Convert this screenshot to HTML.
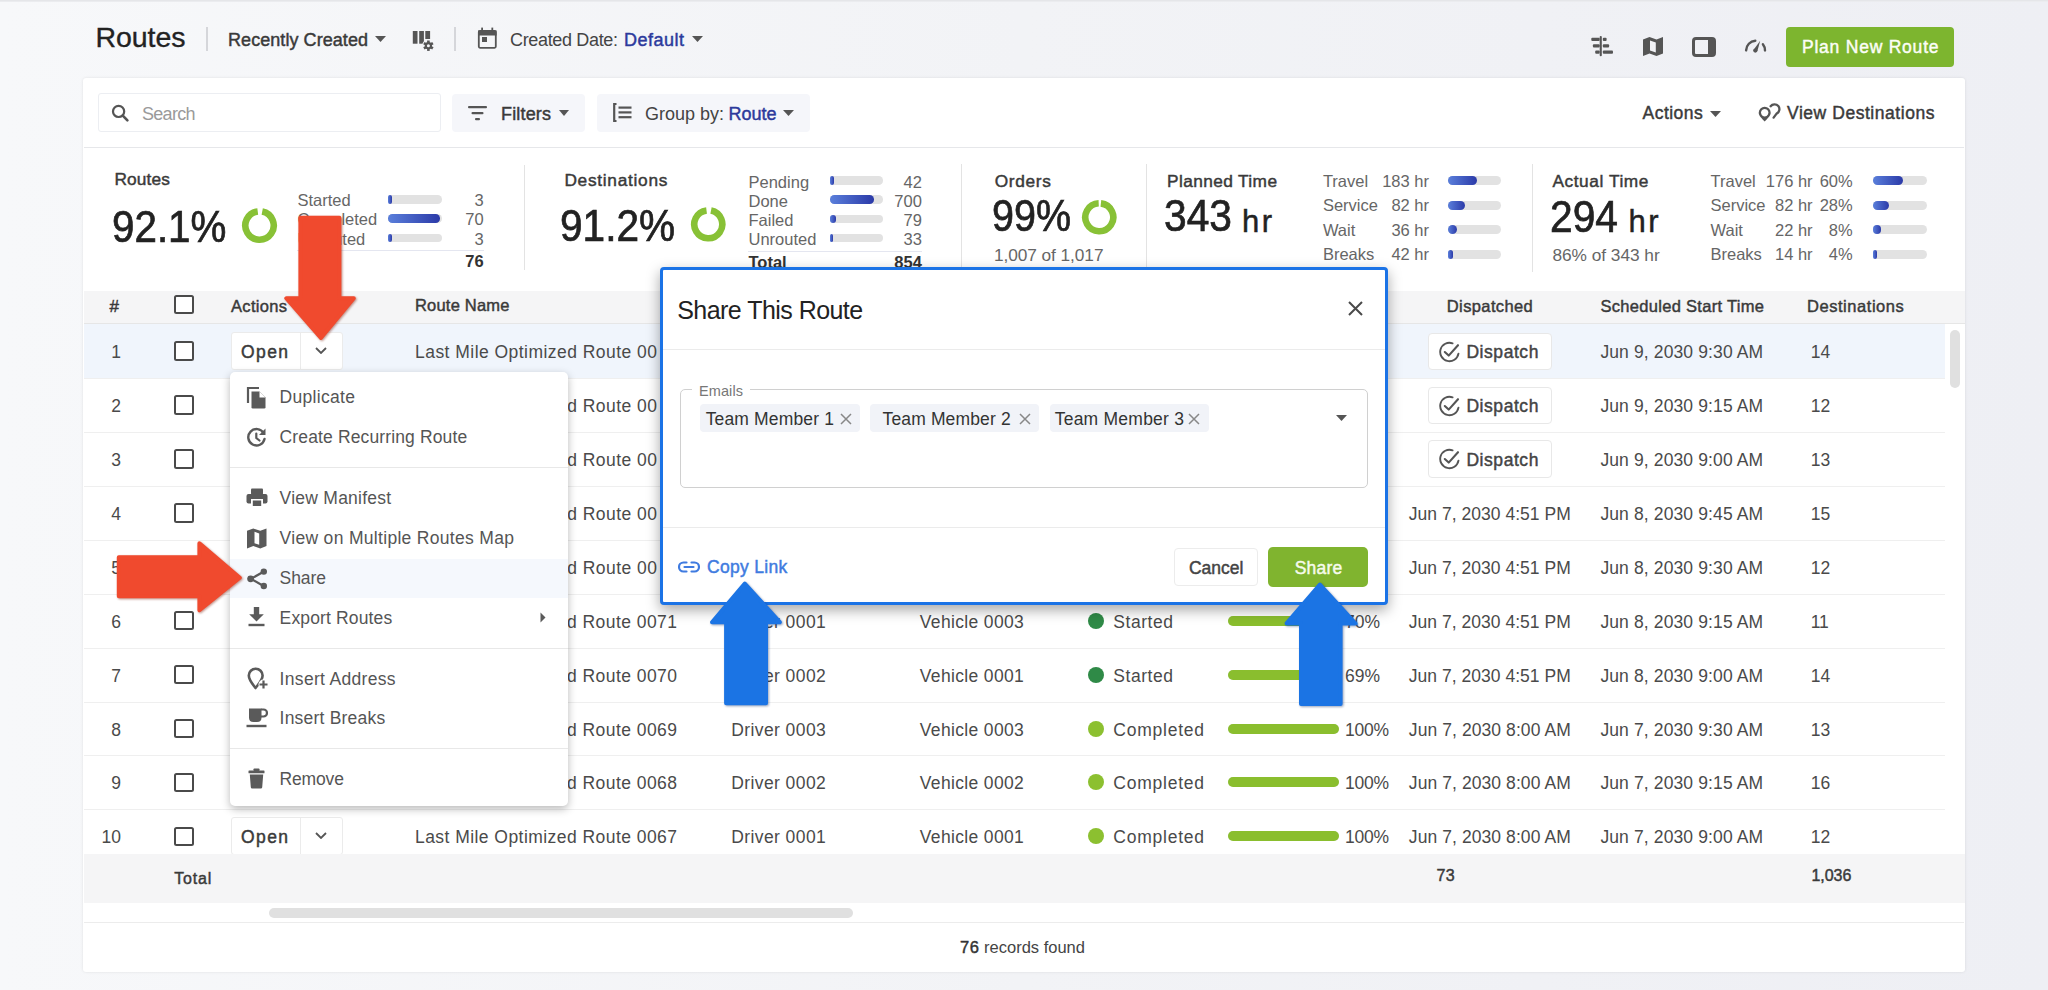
<!DOCTYPE html>
<html><head><meta charset="utf-8"><title>Routes</title>
<style>
html,body{margin:0;padding:0;}
body{width:2048px;height:990px;overflow:hidden;position:relative;background:#f1f2f6;font-family:"Liberation Sans", sans-serif;}
.t{position:absolute;white-space:pre;line-height:1;font-family:"Liberation Sans", sans-serif;}
</style></head><body>
<div style="position:absolute;left:0px;top:0px;width:2048px;height:990px;background:linear-gradient(90deg,#f7f8fa 0%,#f2f3f6 50%,#eeeff4 100%)"></div>
<div style="position:absolute;left:0px;top:0px;width:2048px;height:2px;background:linear-gradient(180deg,#e2e3e6,#eeeff2)"></div>
<div class="t" style="left:95.50px;top:23.37px;font-size:28.5px;font-weight:400;color:#222;letter-spacing:-0.062px;-webkit-text-stroke:0.35px #222;">Routes</div>
<div style="position:absolute;left:206px;top:27px;width:2px;height:24px;background:#d5d6da"></div>
<div class="t" style="left:228.00px;top:31.26px;font-size:18px;font-weight:400;color:#3a3a3a;letter-spacing:0.061px;-webkit-text-stroke:0.45px #3a3a3a;">Recently Created</div>
<svg style="position:absolute;left:375px;top:36px;" width="11" height="6" viewBox="0 0 11 6"><path d="M0 0 L11 0 L5.5 6 Z" fill="#555"/></svg>
<svg style="position:absolute;left:412px;top:30px;" width="22" height="22" viewBox="0 0 22 22"><rect x="0.8" y="1" width="4.7" height="12.7" fill="#555"/><rect x="7.2" y="1" width="4.7" height="12.7" fill="#555"/><rect x="13.3" y="1" width="4.8" height="8" fill="#555"/><g transform="translate(16.4,15.7)"><circle r="6.3" fill="#f4f5f8"/><circle r="3.6" fill="#555"/><rect x="-1.3" y="-5.2" width="2.6" height="3" transform="rotate(0)" fill="#555"/><rect x="-1.3" y="-5.2" width="2.6" height="3" transform="rotate(60)" fill="#555"/><rect x="-1.3" y="-5.2" width="2.6" height="3" transform="rotate(120)" fill="#555"/><rect x="-1.3" y="-5.2" width="2.6" height="3" transform="rotate(180)" fill="#555"/><rect x="-1.3" y="-5.2" width="2.6" height="3" transform="rotate(240)" fill="#555"/><rect x="-1.3" y="-5.2" width="2.6" height="3" transform="rotate(300)" fill="#555"/><circle r="1.5" fill="#f4f5f8"/></g></svg>
<div style="position:absolute;left:454px;top:27px;width:2px;height:24px;background:#d5d6da"></div>
<svg style="position:absolute;left:477px;top:27px;" width="21" height="22" viewBox="0 0 21 22"><rect x="1.8" y="4" width="17" height="16.8" rx="1.2" fill="none" stroke="#555" stroke-width="1.8"/><rect x="1" y="3.5" width="18.6" height="5" fill="#555"/><rect x="4.2" y="0.6" width="1.8" height="4" fill="#555"/><rect x="14.4" y="0.6" width="1.8" height="4" fill="#555"/><rect x="5" y="10" width="5" height="5" fill="#555"/></svg>
<div class="t" style="left:510.00px;top:31.26px;font-size:18px;font-weight:400;color:#444;letter-spacing:-0.339px;">Created Date:</div>
<div class="t" style="left:624.00px;top:31.26px;font-size:18px;font-weight:400;color:#2c3a9c;letter-spacing:0.492px;-webkit-text-stroke:0.45px #2c3a9c;">Default</div>
<svg style="position:absolute;left:692px;top:36px;" width="11" height="6" viewBox="0 0 11 6"><path d="M0 0 L11 0 L5.5 6 Z" fill="#555"/></svg>
<svg style="position:absolute;left:1590px;top:36px;" width="24" height="21" viewBox="0 0 24 21"><rect x="9.7" y="0" width="2.1" height="20.2" rx="1" fill="#555"/><rect x="1.3" y="1.8" width="8.4" height="3.2" rx="1" fill="#555"/><rect x="12.8" y="1.8" width="3.8" height="3.2" rx="1" fill="#555"/><rect x="2.9" y="8.2" width="6.8" height="3.4" rx="1" fill="#555"/><rect x="12.8" y="8.2" width="6.3" height="3.4" rx="1" fill="#555"/><rect x="5.2" y="14.4" width="4.5" height="3.4" rx="1" fill="#555"/><rect x="12.8" y="14.4" width="10.2" height="3.4" rx="1" fill="#555"/></svg>
<svg style="position:absolute;left:1643px;top:37px;" width="20" height="19" viewBox="0 0 20 19"><path d="M0 2.5 L6.5 0 L13.5 2.5 L20 0 L20 16.5 L13.5 19 L6.5 16.5 L0 19 Z" fill="#555"/><path d="M7 3.5 L12.8 5.5 L12.8 15.5 L7 13.5 Z" fill="#f1f2f6"/></svg>
<svg style="position:absolute;left:1692px;top:37px;" width="24" height="20" viewBox="0 0 24 20"><rect x="1.5" y="1.5" width="21" height="17" rx="2.5" fill="none" stroke="#555" stroke-width="3"/><rect x="16" y="1.5" width="6.5" height="17" fill="#555"/></svg>
<svg style="position:absolute;left:1744px;top:39px;" width="24" height="14" viewBox="0 0 24 14"><path d="M2.1 11.4 A10 10 0 0 1 11.3 1.7" fill="none" stroke="#555" stroke-width="2.4" stroke-linecap="round"/><path d="M18.9 5.3 A10 10 0 0 1 21 11.4" fill="none" stroke="#555" stroke-width="2.4" stroke-linecap="round"/><path d="M9.3 11.2 L16.2 1.8 L13.3 12.2 Z" fill="#555"/><circle cx="11.3" cy="11.6" r="2.1" fill="#555"/></svg>
<div style="position:absolute;left:1786px;top:27px;width:168px;height:40px;background:#7db52f;border-radius:4px"></div>
<div class="t" style="left:1802.00px;top:39.19px;font-size:17.5px;font-weight:400;color:#fbfdf6;letter-spacing:0.772px;-webkit-text-stroke:0.45px #fbfdf6;">Plan New Route</div>
<div style="position:absolute;left:83px;top:78px;width:1882px;height:894px;background:#fff;border-radius:3px;box-shadow:0 0 3px rgba(0,0,0,0.10)"></div>
<div style="position:absolute;left:98px;top:93px;width:343px;height:39px;background:#fff;border:1px solid #eceef2;border-radius:3px;box-sizing:border-box"></div>
<svg style="position:absolute;left:110px;top:103px;" width="20" height="20" viewBox="0 0 20 20"><circle cx="8.6" cy="8.4" r="5.6" fill="none" stroke="#555" stroke-width="2.2"/><path d="M12.8 12.6 L17.4 17.4" stroke="#555" stroke-width="2.6" stroke-linecap="round"/></svg>
<div class="t" style="left:142.00px;top:104.76px;font-size:18px;font-weight:400;color:#9a9a9a;letter-spacing:-0.709px;">Search</div>
<div style="position:absolute;left:452px;top:94px;width:133px;height:38px;background:#f5f6fa;border-radius:4px"></div>
<svg style="position:absolute;left:468px;top:105px;" width="21" height="17" viewBox="0 0 21 17"><rect x="0" y="1" width="19" height="2.3" rx="1" fill="#555"/><rect x="3.5" y="7" width="12" height="2.3" rx="1" fill="#555"/><rect x="7" y="13" width="5" height="2.3" rx="1" fill="#555"/></svg>
<div class="t" style="left:501.00px;top:104.76px;font-size:18px;font-weight:400;color:#3a3a3a;letter-spacing:0.167px;-webkit-text-stroke:0.45px #3a3a3a;">Filters</div>
<svg style="position:absolute;left:559px;top:110px;" width="10" height="6" viewBox="0 0 10 6"><path d="M0 0 L10 0 L5 6 Z" fill="#555"/></svg>
<div style="position:absolute;left:597px;top:94px;width:213px;height:38px;background:#f5f6fa;border-radius:4px"></div>
<svg style="position:absolute;left:613px;top:103px;" width="19" height="19" viewBox="0 0 19 19"><path d="M3.5 1 L1.2 1 L1.2 18 L3.5 18" fill="none" stroke="#555" stroke-width="2.2"/><rect x="5.5" y="3.5" width="13" height="2.2" fill="#555"/><rect x="5.5" y="8.3" width="13" height="2.2" fill="#555"/><rect x="5.5" y="13.1" width="13" height="2.2" fill="#555"/></svg>
<div class="t" style="left:645.00px;top:104.76px;font-size:18px;font-weight:400;color:#444;letter-spacing:0.000px;">Group by: </div>
<div class="t" style="left:728.50px;top:104.76px;font-size:18px;font-weight:400;color:#2c3a9c;letter-spacing:-0.012px;-webkit-text-stroke:0.45px #2c3a9c;">Route</div>
<svg style="position:absolute;left:783px;top:110px;" width="11" height="6" viewBox="0 0 11 6"><path d="M0 0 L11 0 L5.5 6 Z" fill="#555"/></svg>
<div class="t" style="left:1642.50px;top:104.69px;font-size:17.5px;font-weight:400;color:#3a3a3a;letter-spacing:0.485px;-webkit-text-stroke:0.45px #3a3a3a;">Actions</div>
<svg style="position:absolute;left:1710px;top:111px;" width="11" height="6" viewBox="0 0 11 6"><path d="M0 0 L11 0 L5.5 6 Z" fill="#555"/></svg>
<svg style="position:absolute;left:1756px;top:100px;" width="26" height="24" viewBox="0 0 26 24"><path fill-rule="evenodd" d="M8.7 21.6 C6.2 18.6 2.7 15.8 2.7 12.7 A6 6 0 0 1 14.7 12.7 C14.7 15.8 11.2 18.6 8.7 21.6 Z M8.7 9 A3.7 3.7 0 1 0 8.71 9 Z" fill="#555"/><path d="M14.6 6.2 A4.9 4.9 0 1 1 20.6 13.6 L17.6 17.6" fill="none" stroke="#555" stroke-width="2.3" stroke-linecap="round"/></svg>
<div class="t" style="left:1787.00px;top:104.69px;font-size:17.5px;font-weight:400;color:#3a3a3a;letter-spacing:0.545px;-webkit-text-stroke:0.45px #3a3a3a;">View Destinations</div>
<div style="position:absolute;left:84px;top:147px;width:1880px;height:1px;background:#e6e7ea"></div>
<div class="t" style="left:114.40px;top:170.86px;font-size:17.3px;font-weight:400;color:#3a3a3a;letter-spacing:0.167px;-webkit-text-stroke:0.45px #3a3a3a;">Routes</div>
<div class="t" style="left:111.60px;top:206.08px;font-size:43.5px;font-weight:400;color:#222;letter-spacing:0.000px;transform:scaleX(0.9275);transform-origin:0 0;-webkit-text-stroke:0.7px #222;">92.1%</div>
<svg style="position:absolute;left:239.5px;top:205.5px;" width="39" height="39" viewBox="0 0 39 39"><path d="M22.23 5.56 A14.2 14.2 0 1 1 17.75 5.41" fill="none" stroke="#88c136" stroke-width="6.6"/></svg>
<div class="t" style="left:297.40px;top:192.13px;font-size:16.5px;font-weight:400;color:#666;letter-spacing:0.000px;">Started</div>
<div style="position:absolute;left:388.4px;top:195.1px;width:53.60000000000002px;height:8.599999999999994px;background:#e2e2e2;border-radius:4.3px"></div>
<div style="position:absolute;left:388.4px;top:195.1px;width:3.6000000000000227px;height:8.599999999999994px;background:linear-gradient(90deg,#5a7fdb,#2b3aa8);border-radius:4.3px"></div>
<div class="t" style="left:474.41px;top:192.13px;font-size:16.5px;font-weight:400;color:#666;letter-spacing:0.000px;">3</div>
<div class="t" style="left:297.40px;top:211.43px;font-size:16.5px;font-weight:400;color:#666;letter-spacing:0.000px;">Completed</div>
<div style="position:absolute;left:388.4px;top:214.4px;width:53.60000000000002px;height:8.599999999999994px;background:#e2e2e2;border-radius:4.3px"></div>
<div style="position:absolute;left:388.4px;top:214.4px;width:51.60000000000002px;height:8.599999999999994px;background:linear-gradient(90deg,#5a7fdb,#2b3aa8);border-radius:4.3px"></div>
<div class="t" style="left:465.24px;top:211.43px;font-size:16.5px;font-weight:400;color:#666;letter-spacing:0.000px;">70</div>
<div class="t" style="left:297.40px;top:230.73px;font-size:16.5px;font-weight:400;color:#666;letter-spacing:0.000px;">Unrouted</div>
<div style="position:absolute;left:388.4px;top:233.7px;width:53.60000000000002px;height:8.600000000000023px;background:#e2e2e2;border-radius:4.3px"></div>
<div style="position:absolute;left:388.4px;top:233.7px;width:3.6000000000000227px;height:8.600000000000023px;background:linear-gradient(90deg,#5a7fdb,#2b3aa8);border-radius:4.3px"></div>
<div class="t" style="left:474.41px;top:230.73px;font-size:16.5px;font-weight:400;color:#666;letter-spacing:0.000px;">3</div>
<div style="position:absolute;left:297px;top:250px;width:187px;height:1px;background:#e4e6f0"></div>
<div class="t" style="left:465.24px;top:252.53px;font-size:16.5px;font-weight:700;color:#333;letter-spacing:0.000px;">76</div>
<div style="position:absolute;left:524px;top:165px;width:1px;height:105px;background:#e3e3e3"></div>
<div class="t" style="left:564.40px;top:171.56px;font-size:17.3px;font-weight:400;color:#3a3a3a;letter-spacing:0.717px;-webkit-text-stroke:0.45px #3a3a3a;">Destinations</div>
<div class="t" style="left:560.30px;top:204.58px;font-size:43.5px;font-weight:400;color:#222;letter-spacing:0.000px;transform:scaleX(0.9340);transform-origin:0 0;-webkit-text-stroke:0.7px #222;">91.2%</div>
<svg style="position:absolute;left:689.3px;top:204.9px;" width="38.6" height="38.6" viewBox="0 0 38.6 38.6"><path d="M22.02 5.57 A14.0 14.0 0 1 1 17.54 5.41" fill="none" stroke="#88c136" stroke-width="6.6"/></svg>
<div class="t" style="left:748.50px;top:173.73px;font-size:16.5px;font-weight:400;color:#666;letter-spacing:0.000px;">Pending</div>
<div style="position:absolute;left:829.5px;top:176.1px;width:53.700000000000045px;height:8.599999999999994px;background:#e2e2e2;border-radius:4.3px"></div>
<div style="position:absolute;left:829.5px;top:176.1px;width:4.5px;height:8.599999999999994px;background:linear-gradient(90deg,#5a7fdb,#2b3aa8);border-radius:4.3px"></div>
<div class="t" style="left:903.54px;top:173.73px;font-size:16.5px;font-weight:400;color:#666;letter-spacing:0.000px;">42</div>
<div class="t" style="left:748.50px;top:192.93px;font-size:16.5px;font-weight:400;color:#666;letter-spacing:0.000px;">Done</div>
<div style="position:absolute;left:829.5px;top:195.3px;width:53.700000000000045px;height:8.599999999999994px;background:#e2e2e2;border-radius:4.3px"></div>
<div style="position:absolute;left:829.5px;top:195.3px;width:44.10000000000002px;height:8.599999999999994px;background:linear-gradient(90deg,#5a7fdb,#2b3aa8);border-radius:4.3px"></div>
<div class="t" style="left:894.37px;top:192.93px;font-size:16.5px;font-weight:400;color:#666;letter-spacing:0.000px;">700</div>
<div class="t" style="left:748.50px;top:212.13px;font-size:16.5px;font-weight:400;color:#666;letter-spacing:0.000px;">Failed</div>
<div style="position:absolute;left:829.5px;top:214.5px;width:53.700000000000045px;height:8.599999999999994px;background:#e2e2e2;border-radius:4.3px"></div>
<div style="position:absolute;left:829.5px;top:214.5px;width:6.5px;height:8.599999999999994px;background:linear-gradient(90deg,#5a7fdb,#2b3aa8);border-radius:4.3px"></div>
<div class="t" style="left:903.54px;top:212.13px;font-size:16.5px;font-weight:400;color:#666;letter-spacing:0.000px;">79</div>
<div class="t" style="left:748.50px;top:231.33px;font-size:16.5px;font-weight:400;color:#666;letter-spacing:0.000px;">Unrouted</div>
<div style="position:absolute;left:829.5px;top:233.7px;width:53.700000000000045px;height:8.600000000000023px;background:#e2e2e2;border-radius:4.3px"></div>
<div style="position:absolute;left:829.5px;top:233.7px;width:3.5px;height:8.600000000000023px;background:linear-gradient(90deg,#5a7fdb,#2b3aa8);border-radius:4.3px"></div>
<div class="t" style="left:903.54px;top:231.33px;font-size:16.5px;font-weight:400;color:#666;letter-spacing:0.000px;">33</div>
<div style="position:absolute;left:748px;top:250.5px;width:174px;height:1.0px;background:#e4e6f0"></div>
<div class="t" style="left:748.50px;top:254.23px;font-size:16.5px;font-weight:700;color:#333;letter-spacing:0.000px;">Total</div>
<div class="t" style="left:894.37px;top:254.23px;font-size:16.5px;font-weight:700;color:#333;letter-spacing:0.000px;">854</div>
<div style="position:absolute;left:960.5px;top:163.5px;width:1.0px;height:126.5px;background:#e3e3e3"></div>
<div class="t" style="left:994.80px;top:172.76px;font-size:17.3px;font-weight:400;color:#3a3a3a;letter-spacing:0.634px;-webkit-text-stroke:0.45px #3a3a3a;">Orders</div>
<div class="t" style="left:992.40px;top:195.38px;font-size:43.5px;font-weight:400;color:#222;letter-spacing:0.000px;transform:scaleX(0.9072);transform-origin:0 0;-webkit-text-stroke:0.7px #222;">99%</div>
<svg style="position:absolute;left:1080.0px;top:197.7px;" width="38.6" height="38.6" viewBox="0 0 38.6 38.6"><path d="M20.89 5.39 A14.0 14.0 0 1 1 18.69 5.31" fill="none" stroke="#88c136" stroke-width="6.6"/></svg>
<div class="t" style="left:994.00px;top:247.46px;font-size:17.3px;font-weight:400;color:#666;letter-spacing:-0.078px;">1,007 of 1,017</div>
<div style="position:absolute;left:1145.5px;top:163.5px;width:1.0px;height:126.5px;background:#e3e3e3"></div>
<div class="t" style="left:1167.00px;top:172.86px;font-size:17.3px;font-weight:400;color:#3a3a3a;letter-spacing:0.393px;-webkit-text-stroke:0.45px #3a3a3a;">Planned Time</div>
<div class="t" style="left:1164.00px;top:195.38px;font-size:43.5px;font-weight:400;color:#222;letter-spacing:0.000px;transform:scaleX(0.9369);transform-origin:0 0;-webkit-text-stroke:0.7px #222;">343</div>
<div class="t" style="left:1242.00px;top:205.96px;font-size:31px;font-weight:400;color:#222;letter-spacing:2.422px;-webkit-text-stroke:0.45px #222;">hr</div>
<div class="t" style="left:1322.90px;top:172.53px;font-size:16.5px;font-weight:400;color:#666;letter-spacing:0.000px;">Travel</div>
<div style="position:absolute;left:1448px;top:176.2px;width:53.40000000000009px;height:9.0px;background:#e2e2e2;border-radius:4.5px"></div>
<div style="position:absolute;left:1448px;top:176.2px;width:29px;height:9.0px;background:linear-gradient(90deg,#5a7fdb,#2b3aa8);border-radius:4.5px"></div>
<div class="t" style="left:1382.20px;top:172.53px;font-size:16.5px;font-weight:400;color:#666;letter-spacing:0.000px;">183 hr</div>
<div class="t" style="left:1322.90px;top:197.03px;font-size:16.5px;font-weight:400;color:#666;letter-spacing:0.000px;">Service</div>
<div style="position:absolute;left:1448px;top:200.7px;width:53.40000000000009px;height:9.0px;background:#e2e2e2;border-radius:4.5px"></div>
<div style="position:absolute;left:1448px;top:200.7px;width:17px;height:9.0px;background:linear-gradient(90deg,#5a7fdb,#2b3aa8);border-radius:4.5px"></div>
<div class="t" style="left:1391.39px;top:197.03px;font-size:16.5px;font-weight:400;color:#666;letter-spacing:0.000px;">82 hr</div>
<div class="t" style="left:1322.90px;top:221.53px;font-size:16.5px;font-weight:400;color:#666;letter-spacing:0.000px;">Wait</div>
<div style="position:absolute;left:1448px;top:225.2px;width:53.40000000000009px;height:9.0px;background:#e2e2e2;border-radius:4.5px"></div>
<div style="position:absolute;left:1448px;top:225.2px;width:9px;height:9.0px;background:linear-gradient(90deg,#5a7fdb,#2b3aa8);border-radius:4.5px"></div>
<div class="t" style="left:1391.39px;top:221.53px;font-size:16.5px;font-weight:400;color:#666;letter-spacing:0.000px;">36 hr</div>
<div class="t" style="left:1322.90px;top:246.03px;font-size:16.5px;font-weight:400;color:#666;letter-spacing:0.000px;">Breaks</div>
<div style="position:absolute;left:1448px;top:249.7px;width:53.40000000000009px;height:9.0px;background:#e2e2e2;border-radius:4.5px"></div>
<div style="position:absolute;left:1448px;top:249.7px;width:5px;height:9.0px;background:linear-gradient(90deg,#5a7fdb,#2b3aa8);border-radius:4.5px"></div>
<div class="t" style="left:1391.39px;top:246.03px;font-size:16.5px;font-weight:400;color:#666;letter-spacing:0.000px;">42 hr</div>
<div style="position:absolute;left:1531.5px;top:163.5px;width:1.0px;height:108.5px;background:#e3e3e3"></div>
<div class="t" style="left:1552.40px;top:172.66px;font-size:17.3px;font-weight:400;color:#3a3a3a;letter-spacing:0.572px;-webkit-text-stroke:0.45px #3a3a3a;">Actual Time</div>
<div class="t" style="left:1550.40px;top:195.68px;font-size:43.5px;font-weight:400;color:#222;letter-spacing:0.000px;transform:scaleX(0.9369);transform-origin:0 0;-webkit-text-stroke:0.7px #222;">294</div>
<div class="t" style="left:1628.50px;top:206.26px;font-size:31px;font-weight:400;color:#222;letter-spacing:2.422px;-webkit-text-stroke:0.45px #222;">hr</div>
<div class="t" style="left:1552.40px;top:247.16px;font-size:17.3px;font-weight:400;color:#666;letter-spacing:-0.026px;">86% of 343 hr</div>
<div class="t" style="left:1710.50px;top:172.53px;font-size:16.5px;font-weight:400;color:#666;letter-spacing:0.000px;">Travel</div>
<div class="t" style="left:1765.80px;top:172.53px;font-size:16.5px;font-weight:400;color:#666;letter-spacing:0.000px;">176 hr</div>
<div class="t" style="left:1819.67px;top:172.53px;font-size:16.5px;font-weight:400;color:#666;letter-spacing:0.000px;">60%</div>
<div style="position:absolute;left:1872.7px;top:176.2px;width:54.09999999999991px;height:9.0px;background:#e2e2e2;border-radius:4.5px"></div>
<div style="position:absolute;left:1872.7px;top:176.2px;width:30.0px;height:9.0px;background:linear-gradient(90deg,#5a7fdb,#2b3aa8);border-radius:4.5px"></div>
<div class="t" style="left:1710.50px;top:197.03px;font-size:16.5px;font-weight:400;color:#666;letter-spacing:0.000px;">Service</div>
<div class="t" style="left:1774.99px;top:197.03px;font-size:16.5px;font-weight:400;color:#666;letter-spacing:0.000px;">82 hr</div>
<div class="t" style="left:1819.67px;top:197.03px;font-size:16.5px;font-weight:400;color:#666;letter-spacing:0.000px;">28%</div>
<div style="position:absolute;left:1872.7px;top:200.7px;width:54.09999999999991px;height:9.0px;background:#e2e2e2;border-radius:4.5px"></div>
<div style="position:absolute;left:1872.7px;top:200.7px;width:16.799999999999955px;height:9.0px;background:linear-gradient(90deg,#5a7fdb,#2b3aa8);border-radius:4.5px"></div>
<div class="t" style="left:1710.50px;top:221.53px;font-size:16.5px;font-weight:400;color:#666;letter-spacing:0.000px;">Wait</div>
<div class="t" style="left:1774.99px;top:221.53px;font-size:16.5px;font-weight:400;color:#666;letter-spacing:0.000px;">22 hr</div>
<div class="t" style="left:1828.84px;top:221.53px;font-size:16.5px;font-weight:400;color:#666;letter-spacing:0.000px;">8%</div>
<div style="position:absolute;left:1872.7px;top:225.2px;width:54.09999999999991px;height:9.0px;background:#e2e2e2;border-radius:4.5px"></div>
<div style="position:absolute;left:1872.7px;top:225.2px;width:8.799999999999955px;height:9.0px;background:linear-gradient(90deg,#5a7fdb,#2b3aa8);border-radius:4.5px"></div>
<div class="t" style="left:1710.50px;top:246.03px;font-size:16.5px;font-weight:400;color:#666;letter-spacing:0.000px;">Breaks</div>
<div class="t" style="left:1774.99px;top:246.03px;font-size:16.5px;font-weight:400;color:#666;letter-spacing:0.000px;">14 hr</div>
<div class="t" style="left:1828.84px;top:246.03px;font-size:16.5px;font-weight:400;color:#666;letter-spacing:0.000px;">4%</div>
<div style="position:absolute;left:1872.7px;top:249.7px;width:54.09999999999991px;height:9.0px;background:#e2e2e2;border-radius:4.5px"></div>
<div style="position:absolute;left:1872.7px;top:249.7px;width:4.7999999999999545px;height:9.0px;background:linear-gradient(90deg,#5a7fdb,#2b3aa8);border-radius:4.5px"></div>
<div style="position:absolute;left:84px;top:290.5px;width:1881px;height:33.0px;background:#f5f5f6;border-bottom:1px solid #e6e6e6;box-sizing:border-box"></div>
<div class="t" style="left:109.50px;top:297.71px;font-size:17px;font-weight:400;color:#3a3a3a;letter-spacing:0.000px;-webkit-text-stroke:0.45px #3a3a3a;">#</div>
<div style="position:absolute;left:173.5px;top:294.7px;width:20.0px;height:19.600000000000023px;border:2px solid #4a4a4a;border-radius:2.5px;box-sizing:border-box;background:#fff"></div>
<div class="t" style="left:231.00px;top:297.53px;font-size:16.5px;font-weight:400;color:#3a3a3a;letter-spacing:0.315px;-webkit-text-stroke:0.45px #3a3a3a;">Actions</div>
<div class="t" style="left:415.00px;top:297.23px;font-size:16.5px;font-weight:400;color:#3a3a3a;letter-spacing:0.195px;-webkit-text-stroke:0.45px #3a3a3a;">Route Name</div>
<div class="t" style="left:1446.80px;top:297.53px;font-size:16.5px;font-weight:400;color:#3a3a3a;letter-spacing:0.382px;-webkit-text-stroke:0.45px #3a3a3a;">Dispatched</div>
<div class="t" style="left:1600.40px;top:297.53px;font-size:16.5px;font-weight:400;color:#3a3a3a;letter-spacing:0.308px;-webkit-text-stroke:0.45px #3a3a3a;">Scheduled Start Time</div>
<div class="t" style="left:1807.00px;top:297.53px;font-size:16.5px;font-weight:400;color:#3a3a3a;letter-spacing:0.544px;-webkit-text-stroke:0.45px #3a3a3a;">Destinations</div>
<div style="position:absolute;left:84px;top:323.5px;width:1881px;height:530px;overflow:hidden">
<div style="position:absolute;left:-84px;top:-323.5px;width:2048px;height:990px">
<div style="position:absolute;left:84px;top:324.2px;width:1861px;height:53.89999999999998px;background:#f0f5fc"></div>
<div style="position:absolute;left:84px;top:378.1px;width:1861px;height:1.0px;background:#efefef"></div>
<div class="t" style="left:111.27px;top:344.24px;font-size:17.5px;font-weight:400;color:#4a4a4a;letter-spacing:0.000px;">1</div>
<div style="position:absolute;left:173.5px;top:341.3px;width:20.0px;height:19.599999999999966px;border:2px solid #4a4a4a;border-radius:2.5px;box-sizing:border-box;background:#fff"></div>
<div style="position:absolute;left:231px;top:331.6px;width:112px;height:38.0px;background:#fff;border:1px solid #ebebeb;border-radius:3px;box-sizing:border-box"></div>
<div style="position:absolute;left:300px;top:331.6px;width:1px;height:38.0px;background:#ebebeb"></div>
<div class="t" style="left:241.00px;top:344.24px;font-size:17.5px;font-weight:400;color:#3a3a3a;letter-spacing:1.396px;-webkit-text-stroke:0.45px #3a3a3a;">Open</div>
<svg style="position:absolute;left:315px;top:347.1px;" width="12" height="7" viewBox="0 0 12 7"><path d="M1 1 L6 6 L11 1" fill="none" stroke="#555" stroke-width="1.8"/></svg>
<div class="t" style="left:415.00px;top:344.24px;font-size:17.5px;font-weight:400;color:#4a4a4a;letter-spacing:0.461px;">Last Mile Optimized Route 00</div>
<div class="t" style="left:664.00px;top:344.24px;font-size:17.5px;font-weight:400;color:#4a4a4a;letter-spacing:0.000px;">76</div>
<div style="position:absolute;left:1428.4px;top:332.6px;width:123.89999999999986px;height:37.5px;background:#fff;border:1px solid #e8e8e8;border-radius:4px;box-sizing:border-box"></div>
<svg style="position:absolute;left:1439px;top:340.6px;" width="22" height="22" viewBox="0 0 22 22"><path d="M19.46 12.6 A9.2 9.2 0 1 1 13.55 2.35" fill="none" stroke="#555" stroke-width="1.9" stroke-linecap="round"/><path d="M5.8 11 L9.7 14.6 L19 4.2" fill="none" stroke="#555" stroke-width="2.1" stroke-linecap="round" stroke-linejoin="round"/></svg>
<div class="t" style="left:1466.40px;top:344.24px;font-size:17.5px;font-weight:400;color:#444;letter-spacing:0.558px;-webkit-text-stroke:0.45px #444;">Dispatch</div>
<div class="t" style="left:1600.40px;top:344.24px;font-size:17.5px;font-weight:400;color:#4a4a4a;letter-spacing:0.125px;">Jun 9, 2030 9:30 AM</div>
<div class="t" style="left:1810.70px;top:344.24px;font-size:17.5px;font-weight:400;color:#4a4a4a;letter-spacing:0.000px;">14</div>
<div style="position:absolute;left:84px;top:432.0px;width:1861px;height:1.0px;background:#efefef"></div>
<div class="t" style="left:111.27px;top:398.14px;font-size:17.5px;font-weight:400;color:#4a4a4a;letter-spacing:0.000px;">2</div>
<div style="position:absolute;left:173.5px;top:395.2px;width:20.0px;height:19.600000000000023px;border:2px solid #4a4a4a;border-radius:2.5px;box-sizing:border-box;background:#fff"></div>
<div style="position:absolute;left:231px;top:385.5px;width:112px;height:38.0px;background:#fff;border:1px solid #ebebeb;border-radius:3px;box-sizing:border-box"></div>
<div style="position:absolute;left:300px;top:385.5px;width:1px;height:38.0px;background:#ebebeb"></div>
<div class="t" style="left:241.00px;top:398.14px;font-size:17.5px;font-weight:400;color:#3a3a3a;letter-spacing:1.396px;-webkit-text-stroke:0.45px #3a3a3a;">Open</div>
<svg style="position:absolute;left:315px;top:401.0px;" width="12" height="7" viewBox="0 0 12 7"><path d="M1 1 L6 6 L11 1" fill="none" stroke="#555" stroke-width="1.8"/></svg>
<div class="t" style="left:415.00px;top:398.14px;font-size:17.5px;font-weight:400;color:#4a4a4a;letter-spacing:0.461px;">Last Mile Optimized Route 00</div>
<div class="t" style="left:664.00px;top:398.14px;font-size:17.5px;font-weight:400;color:#4a4a4a;letter-spacing:0.000px;">75</div>
<div style="position:absolute;left:1428.4px;top:386.5px;width:123.89999999999986px;height:37.5px;background:#fff;border:1px solid #e8e8e8;border-radius:4px;box-sizing:border-box"></div>
<svg style="position:absolute;left:1439px;top:394.5px;" width="22" height="22" viewBox="0 0 22 22"><path d="M19.46 12.6 A9.2 9.2 0 1 1 13.55 2.35" fill="none" stroke="#555" stroke-width="1.9" stroke-linecap="round"/><path d="M5.8 11 L9.7 14.6 L19 4.2" fill="none" stroke="#555" stroke-width="2.1" stroke-linecap="round" stroke-linejoin="round"/></svg>
<div class="t" style="left:1466.40px;top:398.14px;font-size:17.5px;font-weight:400;color:#444;letter-spacing:0.558px;-webkit-text-stroke:0.45px #444;">Dispatch</div>
<div class="t" style="left:1600.40px;top:398.14px;font-size:17.5px;font-weight:400;color:#4a4a4a;letter-spacing:0.125px;">Jun 9, 2030 9:15 AM</div>
<div class="t" style="left:1810.70px;top:398.14px;font-size:17.5px;font-weight:400;color:#4a4a4a;letter-spacing:0.000px;">12</div>
<div style="position:absolute;left:84px;top:485.9px;width:1861px;height:1.0px;background:#efefef"></div>
<div class="t" style="left:111.27px;top:452.04px;font-size:17.5px;font-weight:400;color:#4a4a4a;letter-spacing:0.000px;">3</div>
<div style="position:absolute;left:173.5px;top:449.1px;width:20.0px;height:19.69999999999999px;border:2px solid #4a4a4a;border-radius:2.5px;box-sizing:border-box;background:#fff"></div>
<div style="position:absolute;left:231px;top:439.4px;width:112px;height:38.0px;background:#fff;border:1px solid #ebebeb;border-radius:3px;box-sizing:border-box"></div>
<div style="position:absolute;left:300px;top:439.4px;width:1px;height:38.0px;background:#ebebeb"></div>
<div class="t" style="left:241.00px;top:452.04px;font-size:17.5px;font-weight:400;color:#3a3a3a;letter-spacing:1.396px;-webkit-text-stroke:0.45px #3a3a3a;">Open</div>
<svg style="position:absolute;left:315px;top:454.9px;" width="12" height="7" viewBox="0 0 12 7"><path d="M1 1 L6 6 L11 1" fill="none" stroke="#555" stroke-width="1.8"/></svg>
<div class="t" style="left:415.00px;top:452.04px;font-size:17.5px;font-weight:400;color:#4a4a4a;letter-spacing:0.461px;">Last Mile Optimized Route 00</div>
<div class="t" style="left:664.00px;top:452.04px;font-size:17.5px;font-weight:400;color:#4a4a4a;letter-spacing:0.000px;">74</div>
<div style="position:absolute;left:1428.4px;top:440.4px;width:123.89999999999986px;height:37.5px;background:#fff;border:1px solid #e8e8e8;border-radius:4px;box-sizing:border-box"></div>
<svg style="position:absolute;left:1439px;top:448.4px;" width="22" height="22" viewBox="0 0 22 22"><path d="M19.46 12.6 A9.2 9.2 0 1 1 13.55 2.35" fill="none" stroke="#555" stroke-width="1.9" stroke-linecap="round"/><path d="M5.8 11 L9.7 14.6 L19 4.2" fill="none" stroke="#555" stroke-width="2.1" stroke-linecap="round" stroke-linejoin="round"/></svg>
<div class="t" style="left:1466.40px;top:452.04px;font-size:17.5px;font-weight:400;color:#444;letter-spacing:0.558px;-webkit-text-stroke:0.45px #444;">Dispatch</div>
<div class="t" style="left:1600.40px;top:452.04px;font-size:17.5px;font-weight:400;color:#4a4a4a;letter-spacing:0.125px;">Jun 9, 2030 9:00 AM</div>
<div class="t" style="left:1810.70px;top:452.04px;font-size:17.5px;font-weight:400;color:#4a4a4a;letter-spacing:0.000px;">13</div>
<div style="position:absolute;left:84px;top:539.8px;width:1861px;height:1.0px;background:#efefef"></div>
<div class="t" style="left:111.27px;top:505.94px;font-size:17.5px;font-weight:400;color:#4a4a4a;letter-spacing:0.000px;">4</div>
<div style="position:absolute;left:173.5px;top:503.1px;width:20.0px;height:19.5px;border:2px solid #4a4a4a;border-radius:2.5px;box-sizing:border-box;background:#fff"></div>
<div style="position:absolute;left:231px;top:493.4px;width:112px;height:38.0px;background:#fff;border:1px solid #ebebeb;border-radius:3px;box-sizing:border-box"></div>
<div style="position:absolute;left:300px;top:493.4px;width:1px;height:38.0px;background:#ebebeb"></div>
<div class="t" style="left:241.00px;top:505.94px;font-size:17.5px;font-weight:400;color:#3a3a3a;letter-spacing:1.396px;-webkit-text-stroke:0.45px #3a3a3a;">Open</div>
<svg style="position:absolute;left:315px;top:508.9px;" width="12" height="7" viewBox="0 0 12 7"><path d="M1 1 L6 6 L11 1" fill="none" stroke="#555" stroke-width="1.8"/></svg>
<div class="t" style="left:415.00px;top:505.94px;font-size:17.5px;font-weight:400;color:#4a4a4a;letter-spacing:0.461px;">Last Mile Optimized Route 00</div>
<div class="t" style="left:664.00px;top:505.94px;font-size:17.5px;font-weight:400;color:#4a4a4a;letter-spacing:0.000px;">73</div>
<div class="t" style="left:1408.80px;top:505.94px;font-size:17.5px;font-weight:400;color:#4a4a4a;letter-spacing:0.028px;">Jun 7, 2030 4:51 PM</div>
<div class="t" style="left:1600.40px;top:505.94px;font-size:17.5px;font-weight:400;color:#4a4a4a;letter-spacing:0.125px;">Jun 8, 2030 9:45 AM</div>
<div class="t" style="left:1810.70px;top:505.94px;font-size:17.5px;font-weight:400;color:#4a4a4a;letter-spacing:0.000px;">15</div>
<div style="position:absolute;left:84px;top:593.7px;width:1861px;height:1.0px;background:#efefef"></div>
<div class="t" style="left:111.27px;top:559.84px;font-size:17.5px;font-weight:400;color:#4a4a4a;letter-spacing:0.000px;">5</div>
<div style="position:absolute;left:173.5px;top:557.0px;width:20.0px;height:19.5px;border:2px solid #4a4a4a;border-radius:2.5px;box-sizing:border-box;background:#fff"></div>
<div style="position:absolute;left:231px;top:547.2px;width:112px;height:38.0px;background:#fff;border:1px solid #ebebeb;border-radius:3px;box-sizing:border-box"></div>
<div style="position:absolute;left:300px;top:547.2px;width:1px;height:38.0px;background:#ebebeb"></div>
<div class="t" style="left:241.00px;top:559.84px;font-size:17.5px;font-weight:400;color:#3a3a3a;letter-spacing:1.396px;-webkit-text-stroke:0.45px #3a3a3a;">Open</div>
<svg style="position:absolute;left:315px;top:562.8px;" width="12" height="7" viewBox="0 0 12 7"><path d="M1 1 L6 6 L11 1" fill="none" stroke="#555" stroke-width="1.8"/></svg>
<div class="t" style="left:415.00px;top:559.84px;font-size:17.5px;font-weight:400;color:#4a4a4a;letter-spacing:0.461px;">Last Mile Optimized Route 00</div>
<div class="t" style="left:664.00px;top:559.84px;font-size:17.5px;font-weight:400;color:#4a4a4a;letter-spacing:0.000px;">72</div>
<div class="t" style="left:1408.80px;top:559.84px;font-size:17.5px;font-weight:400;color:#4a4a4a;letter-spacing:0.028px;">Jun 7, 2030 4:51 PM</div>
<div class="t" style="left:1600.40px;top:559.84px;font-size:17.5px;font-weight:400;color:#4a4a4a;letter-spacing:0.125px;">Jun 8, 2030 9:30 AM</div>
<div class="t" style="left:1810.70px;top:559.84px;font-size:17.5px;font-weight:400;color:#4a4a4a;letter-spacing:0.000px;">12</div>
<div style="position:absolute;left:84px;top:647.6px;width:1861px;height:1.0px;background:#efefef"></div>
<div class="t" style="left:111.27px;top:613.74px;font-size:17.5px;font-weight:400;color:#4a4a4a;letter-spacing:0.000px;">6</div>
<div style="position:absolute;left:173.5px;top:610.9px;width:20.0px;height:19.600000000000023px;border:2px solid #4a4a4a;border-radius:2.5px;box-sizing:border-box;background:#fff"></div>
<div style="position:absolute;left:231px;top:601.2px;width:112px;height:38.0px;background:#fff;border:1px solid #ebebeb;border-radius:3px;box-sizing:border-box"></div>
<div style="position:absolute;left:300px;top:601.2px;width:1px;height:38.0px;background:#ebebeb"></div>
<div class="t" style="left:241.00px;top:613.74px;font-size:17.5px;font-weight:400;color:#3a3a3a;letter-spacing:1.396px;-webkit-text-stroke:0.45px #3a3a3a;">Open</div>
<svg style="position:absolute;left:315px;top:616.7px;" width="12" height="7" viewBox="0 0 12 7"><path d="M1 1 L6 6 L11 1" fill="none" stroke="#555" stroke-width="1.8"/></svg>
<div class="t" style="left:415.00px;top:613.74px;font-size:17.5px;font-weight:400;color:#4a4a4a;letter-spacing:0.447px;">Last Mile Optimized Route 0071</div>
<div class="t" style="left:731.20px;top:613.74px;font-size:17.5px;font-weight:400;color:#4a4a4a;letter-spacing:0.413px;">Driver 0001</div>
<div class="t" style="left:919.80px;top:613.74px;font-size:17.5px;font-weight:400;color:#4a4a4a;letter-spacing:0.342px;">Vehicle 0003</div>
<div style="position:absolute;left:1088px;top:612.7px;width:16px;height:16.0px;background:#2f8a47;border-radius:50%"></div>
<div class="t" style="left:1113.30px;top:613.74px;font-size:17.5px;font-weight:400;color:#4a4a4a;letter-spacing:0.527px;">Started</div>
<div style="position:absolute;left:1228.3px;top:615.7px;width:110.70000000000005px;height:10.0px;background:#e6e6e6;border-radius:5px"></div>
<div style="position:absolute;left:1228.3px;top:615.7px;width:77.5px;height:10.0px;background:#8abe2e;border-radius:5px"></div>
<div class="t" style="left:1345.00px;top:613.74px;font-size:17.5px;font-weight:400;color:#4a4a4a;letter-spacing:-0.016px;">70%</div>
<div class="t" style="left:1408.80px;top:613.74px;font-size:17.5px;font-weight:400;color:#4a4a4a;letter-spacing:0.028px;">Jun 7, 2030 4:51 PM</div>
<div class="t" style="left:1600.40px;top:613.74px;font-size:17.5px;font-weight:400;color:#4a4a4a;letter-spacing:0.125px;">Jun 8, 2030 9:15 AM</div>
<div class="t" style="left:1810.70px;top:613.74px;font-size:17.5px;font-weight:400;color:#4a4a4a;letter-spacing:0.000px;">11</div>
<div style="position:absolute;left:84px;top:701.5px;width:1861px;height:1.0px;background:#efefef"></div>
<div class="t" style="left:111.27px;top:667.64px;font-size:17.5px;font-weight:400;color:#4a4a4a;letter-spacing:0.000px;">7</div>
<div style="position:absolute;left:173.5px;top:664.8px;width:20.0px;height:19.5px;border:2px solid #4a4a4a;border-radius:2.5px;box-sizing:border-box;background:#fff"></div>
<div style="position:absolute;left:231px;top:655.0px;width:112px;height:38.0px;background:#fff;border:1px solid #ebebeb;border-radius:3px;box-sizing:border-box"></div>
<div style="position:absolute;left:300px;top:655.0px;width:1px;height:38.0px;background:#ebebeb"></div>
<div class="t" style="left:241.00px;top:667.64px;font-size:17.5px;font-weight:400;color:#3a3a3a;letter-spacing:1.396px;-webkit-text-stroke:0.45px #3a3a3a;">Open</div>
<svg style="position:absolute;left:315px;top:670.5px;" width="12" height="7" viewBox="0 0 12 7"><path d="M1 1 L6 6 L11 1" fill="none" stroke="#555" stroke-width="1.8"/></svg>
<div class="t" style="left:415.00px;top:667.64px;font-size:17.5px;font-weight:400;color:#4a4a4a;letter-spacing:0.447px;">Last Mile Optimized Route 0070</div>
<div class="t" style="left:731.20px;top:667.64px;font-size:17.5px;font-weight:400;color:#4a4a4a;letter-spacing:0.413px;">Driver 0002</div>
<div class="t" style="left:919.80px;top:667.64px;font-size:17.5px;font-weight:400;color:#4a4a4a;letter-spacing:0.342px;">Vehicle 0001</div>
<div style="position:absolute;left:1088px;top:666.5px;width:16px;height:16.0px;background:#2f8a47;border-radius:50%"></div>
<div class="t" style="left:1113.30px;top:667.64px;font-size:17.5px;font-weight:400;color:#4a4a4a;letter-spacing:0.527px;">Started</div>
<div style="position:absolute;left:1228.3px;top:669.5px;width:110.70000000000005px;height:10.0px;background:#e6e6e6;border-radius:5px"></div>
<div style="position:absolute;left:1228.3px;top:669.5px;width:76.40000000000009px;height:10.0px;background:#8abe2e;border-radius:5px"></div>
<div class="t" style="left:1345.00px;top:667.64px;font-size:17.5px;font-weight:400;color:#4a4a4a;letter-spacing:-0.016px;">69%</div>
<div class="t" style="left:1408.80px;top:667.64px;font-size:17.5px;font-weight:400;color:#4a4a4a;letter-spacing:0.028px;">Jun 7, 2030 4:51 PM</div>
<div class="t" style="left:1600.40px;top:667.64px;font-size:17.5px;font-weight:400;color:#4a4a4a;letter-spacing:0.125px;">Jun 8, 2030 9:00 AM</div>
<div class="t" style="left:1810.70px;top:667.64px;font-size:17.5px;font-weight:400;color:#4a4a4a;letter-spacing:0.000px;">14</div>
<div style="position:absolute;left:84px;top:755.4px;width:1861px;height:1.0px;background:#efefef"></div>
<div class="t" style="left:111.27px;top:721.54px;font-size:17.5px;font-weight:400;color:#4a4a4a;letter-spacing:0.000px;">8</div>
<div style="position:absolute;left:173.5px;top:718.7px;width:20.0px;height:19.5px;border:2px solid #4a4a4a;border-radius:2.5px;box-sizing:border-box;background:#fff"></div>
<div style="position:absolute;left:231px;top:709.0px;width:112px;height:38.0px;background:#fff;border:1px solid #ebebeb;border-radius:3px;box-sizing:border-box"></div>
<div style="position:absolute;left:300px;top:709.0px;width:1px;height:38.0px;background:#ebebeb"></div>
<div class="t" style="left:241.00px;top:721.54px;font-size:17.5px;font-weight:400;color:#3a3a3a;letter-spacing:1.396px;-webkit-text-stroke:0.45px #3a3a3a;">Open</div>
<svg style="position:absolute;left:315px;top:724.5px;" width="12" height="7" viewBox="0 0 12 7"><path d="M1 1 L6 6 L11 1" fill="none" stroke="#555" stroke-width="1.8"/></svg>
<div class="t" style="left:415.00px;top:721.54px;font-size:17.5px;font-weight:400;color:#4a4a4a;letter-spacing:0.447px;">Last Mile Optimized Route 0069</div>
<div class="t" style="left:731.20px;top:721.54px;font-size:17.5px;font-weight:400;color:#4a4a4a;letter-spacing:0.413px;">Driver 0003</div>
<div class="t" style="left:919.80px;top:721.54px;font-size:17.5px;font-weight:400;color:#4a4a4a;letter-spacing:0.342px;">Vehicle 0003</div>
<div style="position:absolute;left:1088px;top:720.5px;width:16px;height:16.0px;background:#8cc030;border-radius:50%"></div>
<div class="t" style="left:1113.30px;top:721.54px;font-size:17.5px;font-weight:400;color:#4a4a4a;letter-spacing:0.757px;">Completed</div>
<div style="position:absolute;left:1228.3px;top:723.5px;width:110.70000000000005px;height:10.0px;background:#e6e6e6;border-radius:5px"></div>
<div style="position:absolute;left:1228.3px;top:723.5px;width:110.70000000000005px;height:10.0px;background:#8abe2e;border-radius:5px"></div>
<div class="t" style="left:1345.00px;top:721.54px;font-size:17.5px;font-weight:400;color:#4a4a4a;letter-spacing:-0.255px;">100%</div>
<div class="t" style="left:1408.80px;top:721.54px;font-size:17.5px;font-weight:400;color:#4a4a4a;letter-spacing:0.081px;">Jun 7, 2030 8:00 AM</div>
<div class="t" style="left:1600.40px;top:721.54px;font-size:17.5px;font-weight:400;color:#4a4a4a;letter-spacing:0.125px;">Jun 7, 2030 9:30 AM</div>
<div class="t" style="left:1810.70px;top:721.54px;font-size:17.5px;font-weight:400;color:#4a4a4a;letter-spacing:0.000px;">13</div>
<div style="position:absolute;left:84px;top:809.3px;width:1861px;height:1.0px;background:#efefef"></div>
<div class="t" style="left:111.27px;top:775.44px;font-size:17.5px;font-weight:400;color:#4a4a4a;letter-spacing:0.000px;">9</div>
<div style="position:absolute;left:173.5px;top:772.6px;width:20.0px;height:19.5px;border:2px solid #4a4a4a;border-radius:2.5px;box-sizing:border-box;background:#fff"></div>
<div style="position:absolute;left:231px;top:762.9px;width:112px;height:38.0px;background:#fff;border:1px solid #ebebeb;border-radius:3px;box-sizing:border-box"></div>
<div style="position:absolute;left:300px;top:762.9px;width:1px;height:38.0px;background:#ebebeb"></div>
<div class="t" style="left:241.00px;top:775.44px;font-size:17.5px;font-weight:400;color:#3a3a3a;letter-spacing:1.396px;-webkit-text-stroke:0.45px #3a3a3a;">Open</div>
<svg style="position:absolute;left:315px;top:778.4px;" width="12" height="7" viewBox="0 0 12 7"><path d="M1 1 L6 6 L11 1" fill="none" stroke="#555" stroke-width="1.8"/></svg>
<div class="t" style="left:415.00px;top:775.44px;font-size:17.5px;font-weight:400;color:#4a4a4a;letter-spacing:0.447px;">Last Mile Optimized Route 0068</div>
<div class="t" style="left:731.20px;top:775.44px;font-size:17.5px;font-weight:400;color:#4a4a4a;letter-spacing:0.413px;">Driver 0002</div>
<div class="t" style="left:919.80px;top:775.44px;font-size:17.5px;font-weight:400;color:#4a4a4a;letter-spacing:0.342px;">Vehicle 0002</div>
<div style="position:absolute;left:1088px;top:774.4px;width:16px;height:16.0px;background:#8cc030;border-radius:50%"></div>
<div class="t" style="left:1113.30px;top:775.44px;font-size:17.5px;font-weight:400;color:#4a4a4a;letter-spacing:0.757px;">Completed</div>
<div style="position:absolute;left:1228.3px;top:777.4px;width:110.70000000000005px;height:10.0px;background:#e6e6e6;border-radius:5px"></div>
<div style="position:absolute;left:1228.3px;top:777.4px;width:110.70000000000005px;height:10.0px;background:#8abe2e;border-radius:5px"></div>
<div class="t" style="left:1345.00px;top:775.44px;font-size:17.5px;font-weight:400;color:#4a4a4a;letter-spacing:-0.255px;">100%</div>
<div class="t" style="left:1408.80px;top:775.44px;font-size:17.5px;font-weight:400;color:#4a4a4a;letter-spacing:0.081px;">Jun 7, 2030 8:00 AM</div>
<div class="t" style="left:1600.40px;top:775.44px;font-size:17.5px;font-weight:400;color:#4a4a4a;letter-spacing:0.125px;">Jun 7, 2030 9:15 AM</div>
<div class="t" style="left:1810.70px;top:775.44px;font-size:17.5px;font-weight:400;color:#4a4a4a;letter-spacing:0.000px;">16</div>
<div class="t" style="left:101.53px;top:829.34px;font-size:17.5px;font-weight:400;color:#4a4a4a;letter-spacing:0.000px;">10</div>
<div style="position:absolute;left:173.5px;top:826.5px;width:20.0px;height:19.5px;border:2px solid #4a4a4a;border-radius:2.5px;box-sizing:border-box;background:#fff"></div>
<div style="position:absolute;left:231px;top:816.8px;width:112px;height:38.0px;background:#fff;border:1px solid #ebebeb;border-radius:3px;box-sizing:border-box"></div>
<div style="position:absolute;left:300px;top:816.8px;width:1px;height:38.0px;background:#ebebeb"></div>
<div class="t" style="left:241.00px;top:829.34px;font-size:17.5px;font-weight:400;color:#3a3a3a;letter-spacing:1.396px;-webkit-text-stroke:0.45px #3a3a3a;">Open</div>
<svg style="position:absolute;left:315px;top:832.2px;" width="12" height="7" viewBox="0 0 12 7"><path d="M1 1 L6 6 L11 1" fill="none" stroke="#555" stroke-width="1.8"/></svg>
<div class="t" style="left:415.00px;top:829.34px;font-size:17.5px;font-weight:400;color:#4a4a4a;letter-spacing:0.447px;">Last Mile Optimized Route 0067</div>
<div class="t" style="left:731.20px;top:829.34px;font-size:17.5px;font-weight:400;color:#4a4a4a;letter-spacing:0.413px;">Driver 0001</div>
<div class="t" style="left:919.80px;top:829.34px;font-size:17.5px;font-weight:400;color:#4a4a4a;letter-spacing:0.342px;">Vehicle 0001</div>
<div style="position:absolute;left:1088px;top:828.2px;width:16px;height:16.0px;background:#8cc030;border-radius:50%"></div>
<div class="t" style="left:1113.30px;top:829.34px;font-size:17.5px;font-weight:400;color:#4a4a4a;letter-spacing:0.757px;">Completed</div>
<div style="position:absolute;left:1228.3px;top:831.2px;width:110.70000000000005px;height:10.0px;background:#e6e6e6;border-radius:5px"></div>
<div style="position:absolute;left:1228.3px;top:831.2px;width:110.70000000000005px;height:10.0px;background:#8abe2e;border-radius:5px"></div>
<div class="t" style="left:1345.00px;top:829.34px;font-size:17.5px;font-weight:400;color:#4a4a4a;letter-spacing:-0.255px;">100%</div>
<div class="t" style="left:1408.80px;top:829.34px;font-size:17.5px;font-weight:400;color:#4a4a4a;letter-spacing:0.081px;">Jun 7, 2030 8:00 AM</div>
<div class="t" style="left:1600.40px;top:829.34px;font-size:17.5px;font-weight:400;color:#4a4a4a;letter-spacing:0.125px;">Jun 7, 2030 9:00 AM</div>
<div class="t" style="left:1810.70px;top:829.34px;font-size:17.5px;font-weight:400;color:#4a4a4a;letter-spacing:0.000px;">12</div>
</div></div>
<div style="position:absolute;left:1950px;top:329.6px;width:9.599999999999909px;height:58.39999999999998px;background:#e0e0e0;border-radius:5px"></div>
<div style="position:absolute;left:84px;top:853.5px;width:1881px;height:49.10000000000002px;background:#f5f5f6"></div>
<div class="t" style="left:174.30px;top:870.76px;font-size:16px;font-weight:400;color:#3a3a3a;letter-spacing:0.801px;-webkit-text-stroke:0.45px #3a3a3a;">Total</div>
<div class="t" style="left:1436.50px;top:868.46px;font-size:16px;font-weight:400;color:#3a3a3a;letter-spacing:0.403px;-webkit-text-stroke:0.45px #3a3a3a;">73</div>
<div class="t" style="left:1811.40px;top:868.46px;font-size:16px;font-weight:400;color:#3a3a3a;letter-spacing:-0.012px;-webkit-text-stroke:0.45px #3a3a3a;">1,036</div>
<div style="position:absolute;left:269.2px;top:908px;width:584.0999999999999px;height:9.799999999999955px;background:#e0e0e0;border-radius:5px"></div>
<div style="position:absolute;left:84px;top:921.5px;width:1880px;height:1.0px;background:#ececec"></div>
<div class="t" style="left:960.00px;top:938.93px;font-size:16.5px;font-weight:400;color:#333;letter-spacing:0.641px;-webkit-text-stroke:0.45px #333;">76</div>
<div class="t" style="left:979.50px;top:938.93px;font-size:16.5px;font-weight:400;color:#444;letter-spacing:0.000px;"> records found</div>
<div style="position:absolute;left:229.7px;top:372.1px;width:338.50000000000006px;height:433.9px;background:#fff;border-radius:5px;box-shadow:0 3px 9px rgba(0,0,0,0.28)"></div>
<div style="position:absolute;left:229.7px;top:558.6px;width:338.50000000000006px;height:39.5px;background:#f5f8fd"></div>
<div style="position:absolute;left:229.7px;top:466.6px;width:338.50000000000006px;height:1.0px;background:#e8e8e8"></div>
<div style="position:absolute;left:229.7px;top:647.5px;width:338.50000000000006px;height:1.0px;background:#e8e8e8"></div>
<div style="position:absolute;left:229.7px;top:747.9px;width:338.50000000000006px;height:1.0px;background:#e8e8e8"></div>
<div class="t" style="left:279.60px;top:389.19px;font-size:17.5px;font-weight:400;color:#555;letter-spacing:0.304px;">Duplicate</div>
<div class="t" style="left:279.60px;top:429.09px;font-size:17.5px;font-weight:400;color:#555;letter-spacing:0.133px;">Create Recurring Route</div>
<div class="t" style="left:279.60px;top:489.69px;font-size:17.5px;font-weight:400;color:#555;letter-spacing:0.248px;">View Manifest</div>
<div class="t" style="left:279.60px;top:529.99px;font-size:17.5px;font-weight:400;color:#555;letter-spacing:0.310px;">View on Multiple Routes Map</div>
<div class="t" style="left:279.60px;top:570.39px;font-size:17.5px;font-weight:400;color:#555;letter-spacing:-0.076px;">Share</div>
<div class="t" style="left:279.60px;top:610.09px;font-size:17.5px;font-weight:400;color:#555;letter-spacing:0.142px;">Export Routes</div>
<div class="t" style="left:279.60px;top:670.89px;font-size:17.5px;font-weight:400;color:#555;letter-spacing:0.317px;">Insert Address</div>
<div class="t" style="left:279.60px;top:710.39px;font-size:17.5px;font-weight:400;color:#555;letter-spacing:0.208px;">Insert Breaks</div>
<div class="t" style="left:279.60px;top:770.69px;font-size:17.5px;font-weight:400;color:#555;letter-spacing:-0.174px;">Remove</div>
<svg style="position:absolute;left:246px;top:386px;" width="21" height="23" viewBox="0 0 21 23"><path d="M2 17 L2 2 L13 2" fill="none" stroke="#5a5a5a" stroke-width="2.2"/><path d="M5.5 5.5 L13.5 5.5 L19.5 11.5 L19.5 21.2 Q19.5 22.5 18.2 22.5 L6.8 22.5 Q5.5 22.5 5.5 21.2 Z" fill="#5a5a5a"/><path d="M13.5 5.5 L13.5 11.5 L19.5 11.5" fill="#fff"/></svg>
<svg style="position:absolute;left:246px;top:427px;" width="21" height="21" viewBox="0 0 21 21"><path d="M17.6 6.2 A8.2 8.2 0 1 0 18.5 12" fill="none" stroke="#5a5a5a" stroke-width="2.4" stroke-linecap="round"/><path d="M19.5 1.5 L19.5 8 L13 8 Z" fill="#5a5a5a"/><path d="M10.3 6.5 L10.3 11 L13.5 13.5" fill="none" stroke="#5a5a5a" stroke-width="2.2" stroke-linecap="round"/></svg>
<svg style="position:absolute;left:246px;top:488px;" width="22" height="20" viewBox="0 0 22 20"><rect x="5" y="0.5" width="12" height="6" rx="1" fill="#5a5a5a"/><rect x="0.5" y="6" width="21" height="9.5" rx="2" fill="#5a5a5a"/><rect x="5" y="11" width="12" height="8.5" fill="#fff"/><rect x="6.8" y="12.5" width="8.4" height="5.5" fill="#5a5a5a"/></svg>
<svg style="position:absolute;left:247px;top:528px;" width="20" height="21" viewBox="0 0 20 21"><path d="M0 2.8 L6.3 0.5 L13.3 2.8 L19.5 0.5 L19.5 18 L13.3 20.5 L6.3 18 L0 20.5 Z" fill="#5a5a5a"/><path d="M7.5 3.8 L12.2 5.4 L12.2 16.8 L7.5 15.2 Z" fill="#fff"/></svg>
<svg style="position:absolute;left:247px;top:568px;" width="21" height="22" viewBox="0 0 21 22"><path d="M16.5 3.8 L4 10.8 L16.5 18" fill="none" stroke="#5a5a5a" stroke-width="2.2"/><circle cx="16.8" cy="3.6" r="3.2" fill="#5a5a5a"/><circle cx="3.6" cy="10.8" r="3.4" fill="#5a5a5a"/><circle cx="16.8" cy="18" r="3.2" fill="#5a5a5a"/></svg>
<svg style="position:absolute;left:248px;top:607px;" width="17" height="20" viewBox="0 0 17 20"><rect x="5.8" y="0" width="5.4" height="8" fill="#5a5a5a"/><path d="M1.2 7.2 L15.8 7.2 L8.5 14.5 Z" fill="#5a5a5a"/><rect x="0.5" y="16.8" width="16" height="2.4" fill="#5a5a5a"/></svg>
<svg style="position:absolute;left:540px;top:612px;" width="6" height="11" viewBox="0 0 6 11"><path d="M0.5 0.5 L5.5 5.5 L0.5 10.5 Z" fill="#5a5a5a"/></svg>
<svg style="position:absolute;left:247px;top:667px;" width="22" height="23" viewBox="0 0 22 23"><path d="M8.5 21 C5 16.5 1.8 13 1.8 8.6 A6.9 6.9 0 0 1 15.6 8.6 C15.6 13 12 16.5 8.5 21 Z" fill="none" stroke="#5a5a5a" stroke-width="2.6" stroke-linejoin="round"/><circle cx="16.5" cy="17.5" r="5" fill="#fff"/><path d="M16.5 13.5 L16.5 21.5 M12.5 17.5 L20.5 17.5" stroke="#5a5a5a" stroke-width="2.2"/></svg>
<svg style="position:absolute;left:246px;top:708px;" width="22" height="20" viewBox="0 0 22 20"><path d="M3 0.5 L15.5 0.5 L15.5 9.5 Q15.5 14 11 14 L7.5 14 Q3 14 3 9.5 Z" fill="#5a5a5a"/><path d="M15 1.5 L17.5 1.5 A3.5 3.5 0 0 1 17.5 8.5 L15 8.5" fill="none" stroke="#5a5a5a" stroke-width="2.2"/><rect x="0.5" y="16.8" width="20" height="2.4" fill="#5a5a5a"/></svg>
<svg style="position:absolute;left:248px;top:768px;" width="17" height="21" viewBox="0 0 17 21"><rect x="0.5" y="2.5" width="16" height="2.8" rx="0.6" fill="#5a5a5a"/><rect x="5.5" y="0.5" width="6" height="2.5" rx="0.8" fill="#5a5a5a"/><path d="M1.8 6.5 L15.2 6.5 L14.2 19.2 Q14.1 20.5 12.8 20.5 L4.2 20.5 Q2.9 20.5 2.8 19.2 Z" fill="#5a5a5a"/></svg>
<div style="position:absolute;left:659.5px;top:267px;width:728.0px;height:338px;background:#fff;border:3px solid #1b73e6;border-radius:4px;box-sizing:border-box;box-shadow:0 5px 14px rgba(0,0,0,0.35)"></div>
<div class="t" style="left:677.20px;top:297.54px;font-size:25px;font-weight:400;color:#222;letter-spacing:-0.540px;">Share This Route</div>
<svg style="position:absolute;left:1348px;top:301px;" width="15" height="15" viewBox="0 0 15 15"><path d="M1 1 L14 14 M14 1 L1 14" stroke="#4a4a4a" stroke-width="2"/></svg>
<div style="position:absolute;left:662.5px;top:348.5px;width:722.0px;height:1.0px;background:#ebebeb"></div>
<div style="position:absolute;left:679.5px;top:389px;width:688.5px;height:98.5px;border:1px solid #d0d0d0;border-radius:5px;box-sizing:border-box"></div>
<div style="position:absolute;left:692px;top:386px;width:58px;height:7px;background:#fff"></div>
<div class="t" style="left:699.00px;top:384.23px;font-size:14.5px;font-weight:400;color:#777;letter-spacing:0.097px;">Emails</div>
<div style="position:absolute;left:699.5px;top:403.6px;width:160.0px;height:28.69999999999999px;background:#f1f3f8;border-radius:4px"></div>
<div class="t" style="left:705.70px;top:410.69px;font-size:17.5px;font-weight:400;color:#333;letter-spacing:0.147px;">Team Member 1</div>
<svg style="position:absolute;left:840.4px;top:412.5px;" width="12" height="12" viewBox="0 0 12 12"><path d="M1 1 L11 11 M11 1 L1 11" stroke="#888" stroke-width="1.5"/></svg>
<div style="position:absolute;left:870.4px;top:403.6px;width:168.5000000000001px;height:28.69999999999999px;background:#f1f3f8;border-radius:4px"></div>
<div class="t" style="left:882.50px;top:410.69px;font-size:17.5px;font-weight:400;color:#333;letter-spacing:0.147px;">Team Member 2</div>
<svg style="position:absolute;left:1019px;top:412.5px;" width="12" height="12" viewBox="0 0 12 12"><path d="M1 1 L11 11 M11 1 L1 11" stroke="#888" stroke-width="1.5"/></svg>
<div style="position:absolute;left:1050px;top:403.6px;width:158.5px;height:28.69999999999999px;background:#f1f3f8;border-radius:4px"></div>
<div class="t" style="left:1054.70px;top:410.69px;font-size:17.5px;font-weight:400;color:#333;letter-spacing:0.239px;">Team Member 3</div>
<svg style="position:absolute;left:1188.3px;top:412.5px;" width="12" height="12" viewBox="0 0 12 12"><path d="M1 1 L11 11 M11 1 L1 11" stroke="#888" stroke-width="1.5"/></svg>
<svg style="position:absolute;left:1336px;top:415px;" width="11" height="6" viewBox="0 0 11 6"><path d="M0 0 L11 0 L5.5 6 Z" fill="#555"/></svg>
<div style="position:absolute;left:662.5px;top:527px;width:722.0px;height:1px;background:#ebebeb"></div>
<svg style="position:absolute;left:678px;top:561px;" width="22" height="12" viewBox="0 0 22 12"><path d="M8.5 1.5 L5.5 1.5 A4.5 4.5 0 0 0 5.5 10.5 L8.5 10.5 M13.5 1.5 L16.5 1.5 A4.5 4.5 0 0 1 16.5 10.5 L13.5 10.5 M6.5 6 L15.5 6" fill="none" stroke="#3f7be0" stroke-width="2.2" stroke-linecap="round"/></svg>
<div class="t" style="left:707.00px;top:559.29px;font-size:17.5px;font-weight:400;color:#3f7be0;letter-spacing:0.309px;-webkit-text-stroke:0.45px #3f7be0;">Copy Link</div>
<div style="position:absolute;left:1174.4px;top:547.6px;width:83.59999999999991px;height:38.89999999999998px;background:#fff;border:1px solid #ececec;border-radius:4px;box-sizing:border-box"></div>
<div class="t" style="left:1189.00px;top:559.59px;font-size:17.5px;font-weight:400;color:#444;letter-spacing:-0.017px;-webkit-text-stroke:0.45px #444;">Cancel</div>
<div style="position:absolute;left:1268.4px;top:547px;width:99.59999999999991px;height:40px;background:#80b42f;border-radius:5px"></div>
<div class="t" style="left:1294.70px;top:559.59px;font-size:17.5px;font-weight:400;color:#f6fbec;letter-spacing:0.224px;-webkit-text-stroke:0.45px #f6fbec;">Share</div>
<svg style="position:absolute;left:280px;top:211px;filter:drop-shadow(1px 1.5px 1px rgba(120,20,0,0.45))" width="82" height="135" viewBox="0 0 82 135"><path d="M20.4 6.8 L59.4 6.8 L59.4 87.2 L73.8 87.2 L40.9 126.9 L6.3 87.2 L20.4 87.2 Z" fill="#f04a2e" stroke="#f04a2e" stroke-width="4" stroke-linejoin="round"/></svg>
<svg style="position:absolute;left:112px;top:537px;filter:drop-shadow(1px 1.5px 1px rgba(120,20,0,0.45))" width="136" height="82" viewBox="0 0 136 82"><path d="M6.8 20.2 L87.4 20.2 L87.4 6.2 L127.8 40.8 L87.4 73.2 L87.4 59.2 L6.8 59.2 Z" fill="#f04a2e" stroke="#f04a2e" stroke-width="4" stroke-linejoin="round"/></svg>
<svg style="position:absolute;left:706px;top:577px;filter:drop-shadow(1px 1.5px 1px rgba(0,30,90,0.4))" width="82" height="135" viewBox="0 0 82 135"><path d="M38.8 6.5 L73.8 45.2 L60.0 45.2 L60.0 126.2 L20.1 126.2 L20.1 45.2 L6.0 45.2 Z" fill="#1b74e4" stroke="#1b74e4" stroke-width="4" stroke-linejoin="round"/></svg>
<svg style="position:absolute;left:1280px;top:578px;filter:drop-shadow(1px 1.5px 1px rgba(0,30,90,0.4))" width="84" height="135" viewBox="0 0 84 135"><path d="M39.9 6.5 L75.4 45.4 L60.6 45.4 L60.6 126.1 L21.0 126.1 L21.0 45.4 L6.6 45.4 Z" fill="#1b74e4" stroke="#1b74e4" stroke-width="4" stroke-linejoin="round"/></svg>
</body></html>
